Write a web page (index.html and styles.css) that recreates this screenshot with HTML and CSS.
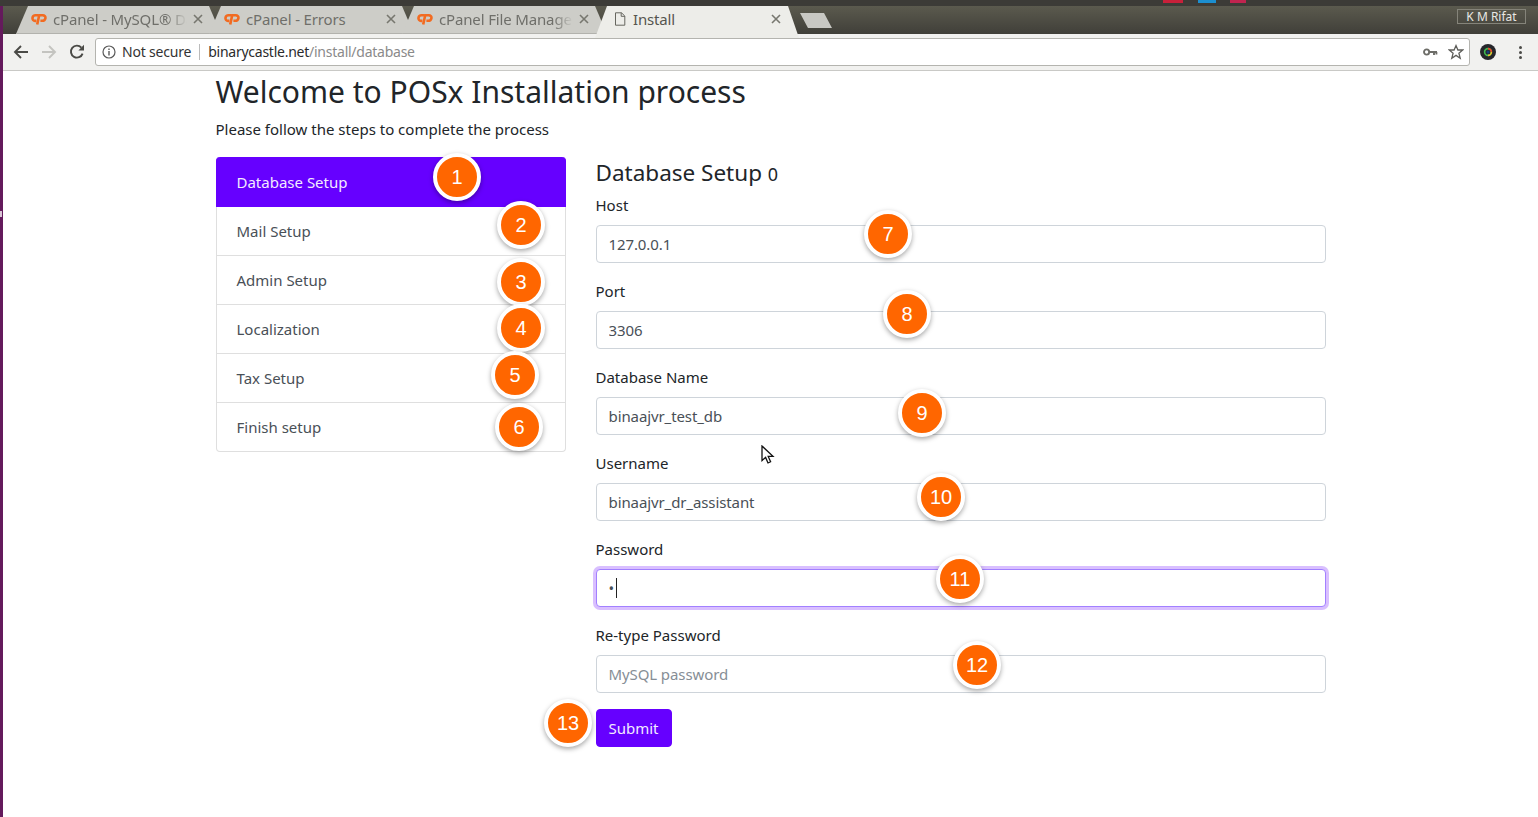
FILE: index.html
```html
<!DOCTYPE html>
<html lang="en">

<head>
    <meta charset="UTF-8">
    <meta name="viewport" content="width=device-width, initial-scale=1.0">
    <title>Install</title>
    <link rel="stylesheet" href="styles.css">
</head>

<body>
    <svg class="defs" width="0" height="0">
        <symbol id="cpanel" viewBox="0 0 16 12">
            <path d="M7 2.3H4.6C2.9 2.3 1.7 3.4 1.5 4.9 1.3 6.6 2.4 7.9 4 7.9H5.4" fill="none" stroke="#f26b21" stroke-width="2.6" />
            <path d="M6.2 11.6 8.2 2.3H11.8C13.5 2.3 14.7 3.5 14.4 5.2 14.1 6.8 12.8 7.8 11.2 7.8H9.4" fill="none" stroke="#f26b21" stroke-width="2.6" />
        </symbol>
        <symbol id="close" viewBox="0 0 10 10">
            <path d="M1 1 9 9M9 1 1 9" fill="none" stroke="#77776f" stroke-width="1.6" />
        </symbol>
    </svg>

    <div class="strip"><span class="notch"></span></div>

    <div class="window">
        <div class="topline">
            <span class="tray tray-red"></span>
            <span class="tray tray-blue"></span>
            <span class="tray tray-pink"></span>
        </div>

        <div class="tabbar">
            <div class="tab">
                <svg class="fav"><use href="#cpanel" /></svg>
                <span class="tab-title">cPanel - MySQL® Da</span>
                <svg class="tab-close"><use href="#close" /></svg>
            </div>
            <div class="tab">
                <svg class="fav"><use href="#cpanel" /></svg>
                <span class="tab-title tab-title-full">cPanel - Errors</span>
                <svg class="tab-close"><use href="#close" /></svg>
            </div>
            <div class="tab">
                <svg class="fav"><use href="#cpanel" /></svg>
                <span class="tab-title">cPanel File Manage</span>
                <svg class="tab-close"><use href="#close" /></svg>
            </div>
            <div class="tab tab-active">
                <svg class="fav doc" viewBox="0 0 12 14">
                    <path d="M1.5 .8H7.5L10.8 4V13.2H1.5ZM7.2 .8V4.3H10.8" fill="none" stroke="#66665f" stroke-width="1" />
                </svg>
                <span class="tab-title tab-title-full">Install</span>
                <svg class="tab-close"><use href="#close" /></svg>
            </div>
            <div class="newtab"></div>
            <div class="profile">K M Rifat</div>
        </div>

        <div class="toolbar">
            <svg class="tool" viewBox="0 0 16 16">
                <path d="M15 8H2.5M8 2 2 8 8 14" fill="none" stroke="#4a4a46" stroke-width="1.9" />
            </svg>
            <svg class="tool" viewBox="0 0 16 16">
                <path d="M1 8H13.5M8 2 14 8 8 14" fill="none" stroke="#c4c4c0" stroke-width="1.9" />
            </svg>
            <svg class="tool" viewBox="0 0 16 16">
                <path d="M13.6 9.6A6 6 0 1 1 12.4 3.6" fill="none" stroke="#4a4a46" stroke-width="1.9" />
                <path d="M9.4 6.4H15V.8Z" fill="#4a4a46" />
            </svg>
            <div class="omnibox">
                <svg class="info" viewBox="0 0 14 14">
                    <circle cx="7" cy="7" r="6" fill="none" stroke="#5a5a5a" stroke-width="1.2" />
                    <path d="M7 6V10.4M7 3.4V5" fill="none" stroke="#5a5a5a" stroke-width="1.4" />
                </svg>
                <span class="secure">Not secure</span>
                <span class="divider"></span>
                <span class="url">binarycastle.net<span class="url-path">/install/database</span></span>
                <svg class="key" viewBox="0 0 15 9">
                    <circle cx="3.6" cy="4" r="2.6" fill="none" stroke="#6d6d68" stroke-width="1.9" />
                    <path d="M6 4H14M11 4V7M13.4 4V6.4" fill="none" stroke="#6d6d68" stroke-width="1.9" />
                </svg>
                <svg class="star" viewBox="0 0 16 16">
                    <path d="M8 1.6 9.9 6H14.8L10.9 9.2 12.2 14.2 8 11.4 3.8 14.2 5.1 9.2 1.2 6H6.1Z" fill="none" stroke="#5e5e5a" stroke-width="1.3" />
                </svg>
            </div>
            <svg class="ext" viewBox="0 0 16 16">
                <circle cx="8" cy="8" r="8" fill="#26262b" />
                <circle cx="8" cy="8" r="3.4" fill="none" stroke="#3fb950" stroke-width="1.6" />
                <path d="M8 4.6A3.4 3.4 0 0 1 11.4 8" fill="none" stroke="#e8482e" stroke-width="1.6" />
                <path d="M11.4 8A3.4 3.4 0 0 1 8 11.4" fill="none" stroke="#e6c12f" stroke-width="1.6" />
                <circle cx="8" cy="8" r="1.5" fill="#123a78" />
            </svg>
            <div class="menu-dots"><i></i><i></i><i></i></div>
        </div>

        <main class="page">
            <div class="container">
                <h1>Welcome to POSx Installation process</h1>
                <p class="lead">Please follow the steps to complete the process</p>

                <div class="row">
                    <ul class="steps">
                        <li class="step step-active">Database Setup</li>
                        <li class="step">Mail Setup</li>
                        <li class="step">Admin Setup</li>
                        <li class="step">Localization</li>
                        <li class="step">Tax Setup</li>
                        <li class="step">Finish setup</li>
                    </ul>

                    <form class="setup-form">
                        <h4>Database Setup <small>0</small></h4>
                        <div class="form-group">
                            <label>Host</label>
                            <input class="form-control" type="text" value="127.0.0.1">
                        </div>
                        <div class="form-group">
                            <label>Port</label>
                            <input class="form-control" type="text" value="3306">
                        </div>
                        <div class="form-group">
                            <label>Database Name</label>
                            <input class="form-control" type="text" value="binaajvr_test_db">
                        </div>
                        <div class="form-group">
                            <label>Username</label>
                            <input class="form-control" type="text" value="binaajvr_dr_assistant">
                        </div>
                        <div class="form-group">
                            <label>Password</label>
                            <div class="input-wrap">
                                <input class="form-control is-focus" type="password" value="x">
                                <span class="caret"></span>
                            </div>
                        </div>
                        <div class="form-group">
                            <label>Re-type Password</label>
                            <input class="form-control" type="password" placeholder="MySQL password">
                        </div>
                        <button class="btn" type="button">Submit</button>
                    </form>
                </div>
            </div>
        </main>
    </div>

    <!-- numbered callouts drawn over the screenshot -->
    <span class="mark m1">1</span>
    <span class="mark m2">2</span>
    <span class="mark m3">3</span>
    <span class="mark m4">4</span>
    <span class="mark m5">5</span>
    <span class="mark m6">6</span>
    <span class="mark m7">7</span>
    <span class="mark m8">8</span>
    <span class="mark m9">9</span>
    <span class="mark m10">10</span>
    <span class="mark m11">11</span>
    <span class="mark m12">12</span>
    <span class="mark m13">13</span>

    <svg class="cursor" viewBox="0 0 14 20">
        <path d="M1 1V15.5L4.6 12.4 7 18 9.6 16.8 7.2 11.4H12Z" fill="#fff" stroke="#111" stroke-width="1.3" />
    </svg>
</body>

</html>
```

FILE: styles.css
```css
* {
    box-sizing: border-box;
}

html,
body {
    height: 100%;
}

body {
    margin: 0;
    display: flex;
    overflow: hidden;
    background: #fff;
    font-family: "Noto Sans", "Open Sans", sans-serif;
    color: #212529;
    position: relative;
}

.defs {
    position: absolute;
}

.strip {
    width: 3px;
    flex: none;
    position: relative;
    background: linear-gradient(#3c3b37 6px, #641a5c 6px);
}

.notch {
    position: absolute;
    left: 0;
    top: 211px;
    width: 2px;
    height: 6px;
    background: #d9c6d6;
}

.window {
    flex: 1;
    min-width: 0;
    display: flex;
    flex-direction: column;
}

/* browser chrome */
.topline {
    height: 6px;
    flex: none;
    background: #3c3b37;
    position: relative;
    overflow: hidden;
}

.tray {
    position: absolute;
    top: 0;
    height: 3px;
}

.tray-red {
    left: 1160px;
    width: 20px;
    background: #c8203a;
}

.tray-blue {
    left: 1195px;
    width: 18px;
    background: #1c8fd0;
}

.tray-pink {
    left: 1227px;
    width: 16px;
    background: #c0244f;
}

.tabbar {
    height: 28px;
    flex: none;
    display: flex;
    align-items: flex-start;
    padding-left: 13px;
    background: linear-gradient(#5b5a4e, #403f39);
    font-size: 15px;
}

.tab {
    width: 205px;
    height: 28px;
    margin-right: -12px;
    padding: 0 18px 3px 15px;
    display: flex;
    align-items: center;
    gap: 6px;
    background: #cdcdc8;
    color: #6f6f6a;
    box-shadow: inset 0 -1px #b2b2ad;
    clip-path: polygon(12px 0, 193px 0, 205px 100%, 0 100%);
}

.fav {
    width: 16px;
    height: 12px;
    flex: none;
}

.tab-title {
    flex: 1;
    min-width: 0;
    white-space: nowrap;
    letter-spacing: -0.15px;
    -webkit-mask-image: linear-gradient(to right, #000 85%, transparent);
    mask-image: linear-gradient(to right, #000 85%, transparent);
}

.tab-title-full {
    -webkit-mask-image: none;
    mask-image: none;
}

.tab-close {
    width: 10px;
    height: 10px;
    flex: none;
}

.tab-active {
    height: 32px;
    width: 204px;
    margin-right: 0;
    padding: 0 18px 7px 19px;
    gap: 7px;
    background: #edede9;
    color: #55554f;
    box-shadow: none;
    position: relative;
    z-index: 1;
    clip-path: polygon(12px 0, 193px 0, 204px 100%, 0 100%);
}

.doc {
    width: 12px;
    height: 14px;
}

.newtab {
    width: 32px;
    height: 15px;
    margin: 7px 0 0 1px;
    background: #c8c8c3;
    clip-path: polygon(0 0, 24px 0, 32px 100%, 8px 100%);
}

.profile {
    margin: 3px 12px 0 auto;
    width: 69px;
    height: 15px;
    border: 1px solid #85847a;
    color: #e8e8e4;
    font-size: 12px;
    line-height: 13px;
    text-align: center;
}

.toolbar {
    height: 37px;
    flex: none;
    display: flex;
    align-items: center;
    padding: 4px 0 4px 10px;
    background: #f1f1ef;
    border-bottom: 1px solid #c9c9c6;
}

.tool {
    width: 16px;
    height: 16px;
    flex: none;
    margin-right: 12px;
}

.omnibox {
    width: 1375px;
    height: 28px;
    margin-left: -2px;
    padding: 0 5px 0 6px;
    display: flex;
    align-items: center;
    background: #fff;
    border: 1px solid #b4b4af;
    border-radius: 3px;
    font-size: 14px;
    letter-spacing: -0.2px;
}

.info {
    width: 14px;
    height: 14px;
    flex: none;
    margin-right: 6px;
}

.secure {
    margin-top: -2px;
    color: #333;
}

.divider {
    width: 1px;
    height: 16px;
    margin: 0 8px 0 8px;
    background: #bbb;
}

.url {
    flex: 1;
    margin-top: -2px;
    color: #2b2b2b;
    letter-spacing: -0.25px;
}

.url-path {
    color: #8a8a8a;
}

.key {
    width: 15px;
    height: 9px;
    margin-right: 10px;
}

.star {
    width: 16px;
    height: 16px;
}

.ext {
    width: 16px;
    height: 16px;
    flex: none;
    margin-left: 10px;
}

.menu-dots {
    margin-left: 23px;
    display: flex;
    flex-direction: column;
    gap: 2px;
}

.menu-dots i {
    width: 3px;
    height: 3px;
    background: #4a4a46;
    border-radius: 50%;
}

/* installer page */
.page {
    flex: 1;
    background: #fff;
}

.container {
    width: 1140px;
    margin: 0 auto;
    padding: 0 15px;
}

h1 {
    margin: 0 0 6px;
    padding-top: 2px;
    font-size: 30px;
    font-weight: 400;
    line-height: 38px;
}

.lead {
    margin: 0 0 16px;
    font-size: 15px;
    line-height: 24px;
}

.row {
    display: flex;
    gap: 30px;
    align-items: flex-start;
}

.steps {
    width: 350px;
    flex: none;
    margin: 0;
    padding: 0;
    list-style: none;
    font-size: 15px;
    color: #495057;
}

.step {
    height: 49px;
    padding: 12px 20px;
    line-height: 24px;
    border: 1px solid #dfdfdf;
    border-top: 0;
}

.step:last-child {
    border-radius: 0 0 4px 4px;
}

.step-active {
    height: 50px;
    padding-top: 13px;
    background: #6600ff;
    border-color: #6600ff;
    border-radius: 4px 4px 0 0;
    color: #f2eaff;
}

.setup-form {
    width: 730px;
    flex: none;
}

h4 {
    margin: 0 0 4px;
    padding-top: 1px;
    font-size: 22.5px;
    font-weight: 400;
    line-height: 30px;
}

h4 small {
    font-size: 18px;
}

.form-group {
    margin-bottom: 16px;
}

label {
    display: block;
    margin-bottom: 8px;
    font-size: 15px;
    line-height: 24px;
}

.form-control {
    display: block;
    width: 100%;
    height: 38px;
    padding: 6px 12px;
    font: inherit;
    font-size: 15px;
    letter-spacing: -0.1px;
    color: #495057;
    background: #fff;
    border: 1px solid #ced4da;
    border-radius: 4px;
    outline: none;
}

.form-control::placeholder {
    color: #868e96;
    opacity: 1;
}

.is-focus {
    border-color: #a280ff;
    box-shadow: 0 0 0 3px rgba(102, 0, 255, 0.25);
}

.input-wrap {
    position: relative;
}

.caret {
    position: absolute;
    left: 20px;
    top: 9px;
    width: 1px;
    height: 20px;
    background: #222;
}

.btn {
    display: block;
    width: 76px;
    height: 38px;
    padding: 6px 0;
    font: inherit;
    font-size: 15px;
    color: #f2eaff;
    background: #6600ff;
    border: 1px solid #6600ff;
    border-radius: 4px;
}

/* callouts */
.mark {
    position: absolute;
    width: 48px;
    height: 48px;
    display: flex;
    justify-content: center;
    align-items: center;
    border: 4px solid #fff;
    border-radius: 50%;
    background: #ff6600;
    color: #fff;
    font-family: "Liberation Sans", Arial, sans-serif;
    font-size: 20px;
    box-shadow: 0 2px 5px rgba(0, 0, 0, 0.35);
}

.m1 { left: 433px; top: 153px; }
.m2 { left: 497px; top: 201px; }
.m3 { left: 497px; top: 258px; }
.m4 { left: 497px; top: 304px; }
.m5 { left: 491px; top: 351px; }
.m6 { left: 495px; top: 403px; }
.m7 { left: 864px; top: 210px; }
.m8 { left: 883px; top: 290px; }
.m9 { left: 898px; top: 389px; }
.m10 { left: 917px; top: 473px; }
.m11 { left: 936px; top: 555px; }
.m12 { left: 953px; top: 641px; }
.m13 { left: 544px; top: 699px; }

.cursor {
    position: absolute;
    left: 761px;
    top: 445px;
    width: 14px;
    height: 20px;
}
```
